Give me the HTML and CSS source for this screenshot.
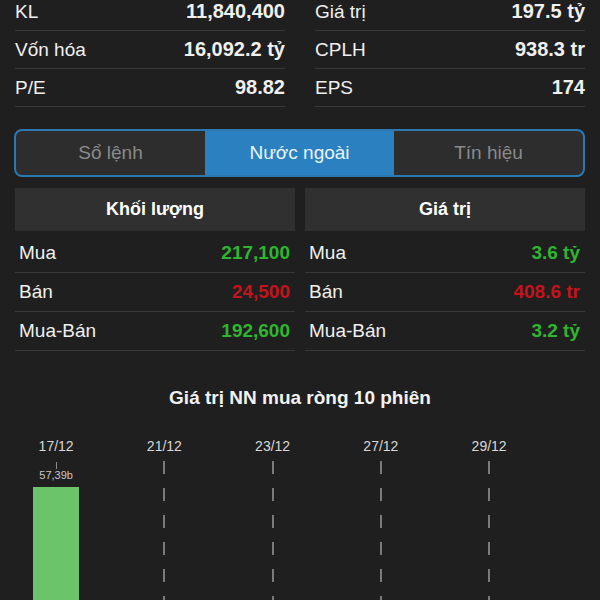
FILE: index.html
```html
<!DOCTYPE html>
<html>
<head>
    <meta name="viewport" content="width=device-width, initial-scale=1">
    <title>Nước ngoài</title>
    <link rel="stylesheet" href="styles.css">
</head>
<body>
    <div class="stats">
        <div class="stat-col">
            <div class="stat-row"><span>KL</span><b>11,840,400</b></div>
            <div class="stat-row"><span>Vốn hóa</span><b>16,092.2 tỷ</b></div>
            <div class="stat-row"><span>P/E</span><b>98.82</b></div>
        </div>
        <div class="stat-col">
            <div class="stat-row"><span>Giá trị</span><b>197.5 tỷ</b></div>
            <div class="stat-row"><span>CPLH</span><b>938.3 tr</b></div>
            <div class="stat-row"><span>EPS</span><b>174</b></div>
        </div>
    </div>

    <div class="tabs">
        <div class="tab">Sổ lệnh</div>
        <div class="tab active">Nước ngoài</div>
        <div class="tab">Tín hiệu</div>
    </div>

    <div class="foreign">
        <div class="table">
            <div class="table-head">Khối lượng</div>
            <div class="row"><span>Mua</span><b class="up">217,100</b></div>
            <div class="row"><span>Bán</span><b class="down">24,500</b></div>
            <div class="row"><span>Mua-Bán</span><b class="up">192,600</b></div>
        </div>
        <div class="table">
            <div class="table-head">Giá trị</div>
            <div class="row"><span>Mua</span><b class="up">3.6 tỷ</b></div>
            <div class="row"><span>Bán</span><b class="down">408.6 tr</b></div>
            <div class="row"><span>Mua-Bán</span><b class="up">3.2 tỷ</b></div>
        </div>
    </div>

    <div class="chart">
        <h2>Giá trị NN mua ròng 10 phiên</h2>
        <div class="chart-cols">
            <div class="col">
                <div class="date">17/12</div>
                <div class="col-body first">
                    <div class="tick"></div>
                    <div class="bar-value">57,39b</div>
                    <div class="bar" style="height: 140px"></div>
                </div>
            </div>
            <div class="col">
                <div class="date">21/12</div>
                <div class="col-body"><div class="dash"></div></div>
            </div>
            <div class="col">
                <div class="date">23/12</div>
                <div class="col-body"><div class="dash"></div></div>
            </div>
            <div class="col">
                <div class="date">27/12</div>
                <div class="col-body"><div class="dash"></div></div>
            </div>
            <div class="col">
                <div class="date">29/12</div>
                <div class="col-body"><div class="dash"></div></div>
            </div>
        </div>
    </div>
</body>
</html>
```

FILE: styles.css
```css
html, body {
    height: 600px;
    overflow: hidden;
}
body {
    margin: 0;
    background-color: #1f1f1f;
    color: #f0f0f0;
    font-family: "Liberation Sans", Arial, sans-serif;
}
.stats {
    display: flex;
    gap: 30px;
    padding: 0 15px;
    margin-top: -7px;
}
.stat-col {
    flex: 1;
}
.stat-row {
    display: flex;
    justify-content: space-between;
    align-items: center;
    height: 37px;
    border-bottom: 1px solid #383838;
    font-size: 19px;
}
.stat-row b {
    font-size: 20px;
}
.tabs {
    display: flex;
    margin: 22px 15px 0 14px;
    height: 44px;
    border: 2px solid #2c78b0;
    border-radius: 8px;
    overflow: hidden;
    background-color: #2d2d2d;
}
.tab {
    flex: 1;
    display: flex;
    align-items: center;
    justify-content: center;
    font-size: 19px;
    color: #8a8a8a;
}
.tab.active {
    background-color: #2b80c0;
    color: #eaf4ff;
}
.foreign {
    display: flex;
    gap: 10px;
    padding: 0 15px;
    margin-top: 11px;
}
.table {
    flex: 1;
}
.table-head {
    height: 43px;
    background-color: #303030;
    display: flex;
    align-items: center;
    justify-content: center;
    font-weight: bold;
    font-size: 18px;
    color: #fff;
}
.row {
    display: flex;
    justify-content: space-between;
    align-items: center;
    height: 38px;
    padding: 0 5px 0 4px;
    border-bottom: 1px solid #383838;
    font-size: 19px;
}
.table-head + .row {
    margin-top: 3px;
}
.row b {
    font-size: 19px;
}
.up {
    color: #2fb52f;
}
.down {
    color: #c2141c;
}
.chart h2 {
    margin: 36px 0 0;
    text-align: center;
    font-size: 19px;
    line-height: 22px;
    color: #f2f2f2;
}
.chart-cols {
    display: grid;
    grid-template-columns: repeat(5, 108.25px);
    padding-left: 2px;
    margin-top: 29px;
}
.col {
    display: flex;
    flex-direction: column;
    align-items: center;
}
.date {
    font-size: 14px;
    line-height: 16px;
    color: #d8d8d8;
}
.col-body {
    display: flex;
    flex-direction: column;
    align-items: center;
    margin-top: 7px;
    height: 160px;
}
.dash {
    width: 2px;
    height: 100%;
    background: repeating-linear-gradient(to bottom, #7a7a7a 0 13px, transparent 13px 27px);
}
.tick {
    width: 1px;
    height: 7px;
    margin-top: 1px;
    background-color: #8a8a8a;
}
.bar-value {
    font-size: 11px;
    line-height: 13px;
    color: #c8c8c8;
}
.bar {
    width: 46px;
    margin-top: 5px;
    background-color: #6cc46a;
}
```
